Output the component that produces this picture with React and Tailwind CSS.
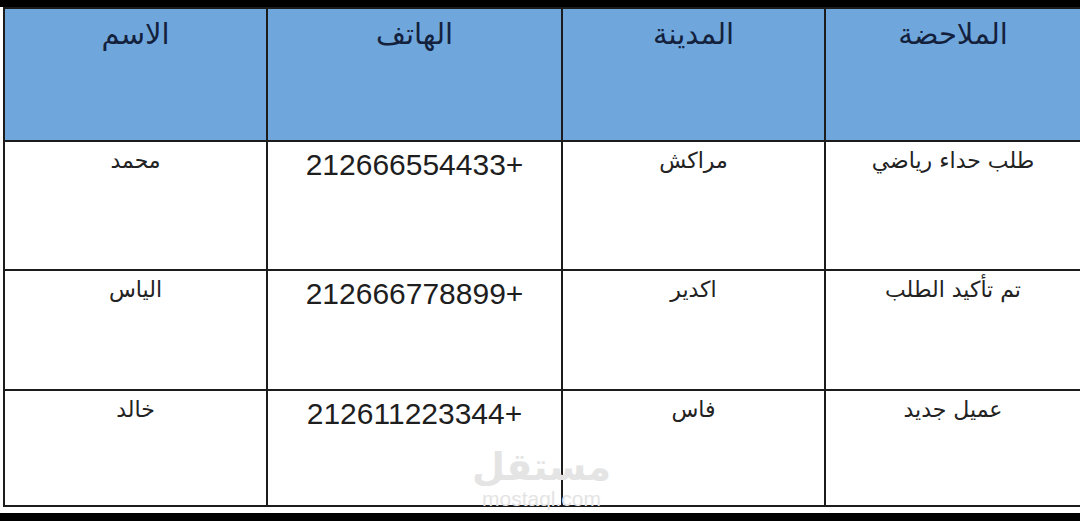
const headers = ['الملاحضة', 'المدينة', 'الهاتف', 'الاسم']

const rows = [
  { note: 'طلب حداء رياضي', city: 'مراكش', phone: '212666554433+', name: 'محمد', h: 'h-[129px]' },
  { note: 'تم تأكيد الطلب', city: 'اكدير', phone: '212666778899+', name: 'الياس', h: 'h-[120px]' },
  { note: 'عميل جديد', city: 'فاس', phone: '212611223344+', name: 'خالد', h: 'h-[116px]' },
]

const cols = 'grid grid-cols-[256px_263px_295px_263px]'
const arabic = { fontFamily: '"DejaVu Sans", "Noto Sans", sans-serif' }

function Cell({ children, className = '' }) {
  return (
    <div className={`border-l-2 border-b-2 border-[#1c1c1c] flex justify-center ${className}`}>
      {children}
    </div>
  )
}

export default function App() {
  return (
    <div className="w-[1080px] h-[521px] bg-black flex flex-col overflow-hidden">
      <div className="h-[7px] flex-shrink-0" />
      <div className="relative flex-1 bg-white pl-[3px]">
        <div dir="rtl" className="border-t-2 border-[#1c1c1c]">
          <div className={`${cols} h-[133px] bg-[#6fa7dc]`}>
            {headers.map((h) => (
              <Cell key={h} className="pt-[11px]">
                <span className="text-[29px] leading-none text-[#14213d]" style={arabic}>{h}</span>
              </Cell>
            ))}
          </div>
          {rows.map((r) => (
            <div key={r.phone} className={`${cols} ${r.h}`}>
              <Cell className="pt-[8px]">
                <span className="text-[22px] leading-none text-[#222]" style={arabic}>{r.note}</span>
              </Cell>
              <Cell className="pt-[8px]">
                <span className="text-[22px] leading-none text-[#222]" style={arabic}>{r.city}</span>
              </Cell>
              <Cell className="pt-[8px]">
                <span dir="ltr" className="text-[30px] leading-none text-[#1e1e1e] font-['Liberation_Sans',sans-serif]">{r.phone}</span>
              </Cell>
              <Cell className="pt-[8px]">
                <span className="text-[22px] leading-none text-[#222]" style={arabic}>{r.name}</span>
              </Cell>
            </div>
          ))}
        </div>
        <div className="absolute left-[472px] top-[441px] flex flex-col items-center gap-[2px] pointer-events-none select-none">
          <span dir="rtl" className="text-[38px] leading-none font-bold text-[#e4e4e4]" style={arabic}>مستقل</span>
          <span className="text-[21px] leading-none text-[#e4e4e4] font-['Liberation_Sans',sans-serif]">mostaql.com</span>
        </div>
      </div>
      <div className="h-[8px] flex-shrink-0" />
    </div>
  )
}
